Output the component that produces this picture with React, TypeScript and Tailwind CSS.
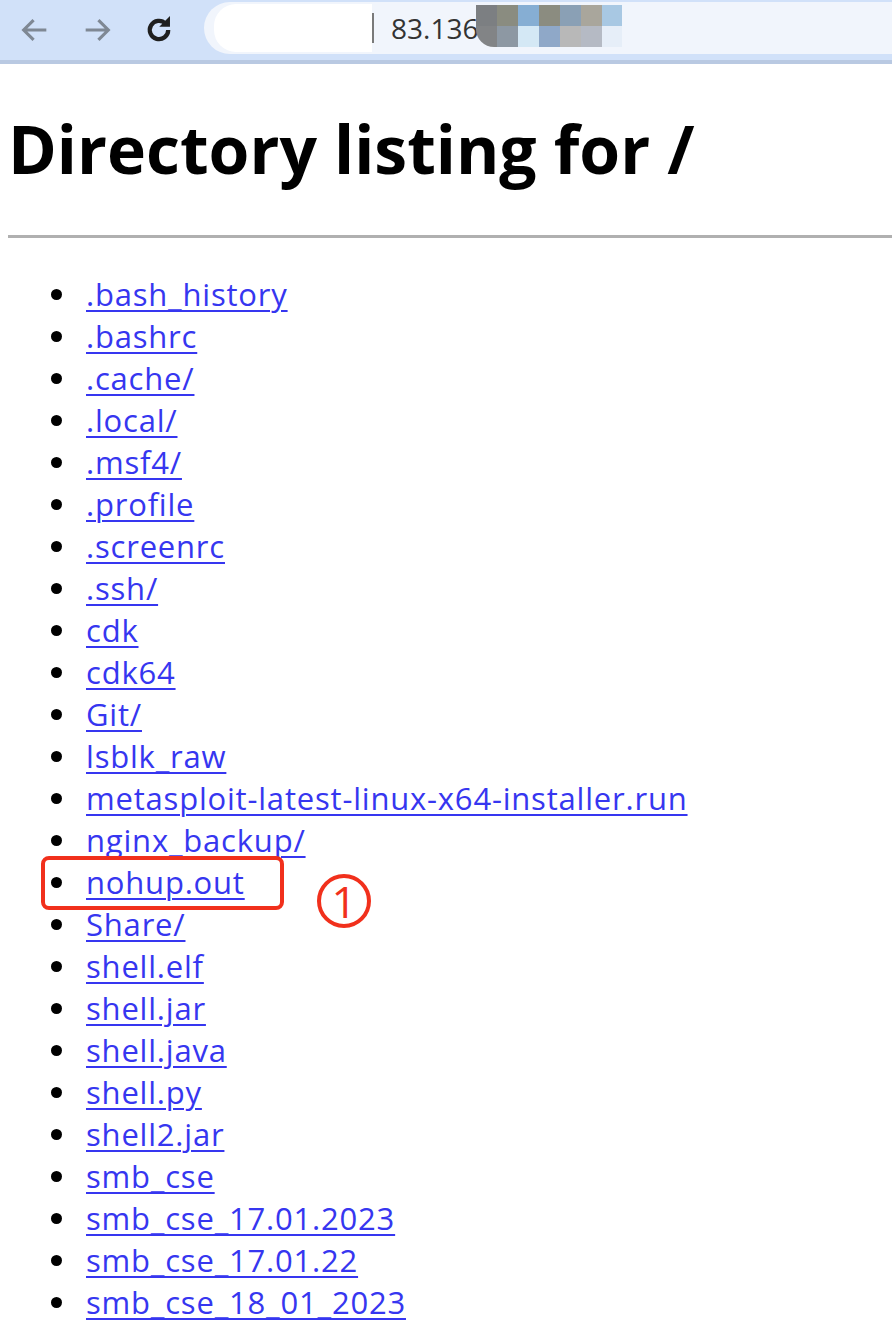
import React from 'react';

const entries = [
  '.bash_history',
  '.bashrc',
  '.cache/',
  '.local/',
  '.msf4/',
  '.profile',
  '.screenrc',
  '.ssh/',
  'cdk',
  'cdk64',
  'Git/',
  'lsblk_raw',
  'metasploit-latest-linux-x64-installer.run',
  'nginx_backup/',
  'nohup.out',
  'Share/',
  'shell.elf',
  'shell.jar',
  'shell.java',
  'shell.py',
  'shell2.jar',
  'smb_cse',
  'smb_cse_17.01.2023',
  'smb_cse_17.01.22',
  'smb_cse_18_01_2023',
];

function BrowserBar() {
  return (
    <div className="h-[64px] bg-[#d1e1f9] border-b-[4px] border-[#b9c9e2] flex items-center">
      <div className="flex items-center gap-[28px] pl-[18px] pr-[28px] text-[#7f8894]">
        <svg width="34" height="34" viewBox="0 0 24 24" fill="none" stroke="currentColor" strokeWidth="2.2">
          <path d="M20 12H4M11 5l-7 7 7 7" />
        </svg>
        <svg width="34" height="34" viewBox="0 0 24 24" fill="none" stroke="currentColor" strokeWidth="2.2">
          <path d="M4 12h16M13 5l7 7-7 7" />
        </svg>
        <svg width="34" height="34" viewBox="0 0 24 24" fill="none" stroke="#1f1f1f" strokeWidth="3">
          <path d="M18.5 12a6.5 6.5 0 1 1-1.9-4.6" />
          <path d="M19 4v5h-5z" fill="#1f1f1f" strokeWidth="1.5" />
        </svg>
      </div>
      <div className="flex-1 h-[52px] mt-[-4px] bg-[#f1f5fc] rounded-l-[26px] flex items-center overflow-hidden">
        <div className="w-[158px] h-[48px] ml-[10px] bg-white rounded-l-[22px]" />
        <div className="w-[2px] h-[30px] bg-[#7a7a7a]" />
        <span className="ml-[17px] text-[28px] text-[#333] font-['Open_Sans',sans-serif]">83.136</span>
        <div className="ml-[-2px] mt-[-4px] h-[42px] w-[146px] rounded-bl-[18px] overflow-hidden grid grid-cols-7 grid-rows-2">
          <div className="bg-[#7c7f82]" />
          <div className="bg-[#8a8c80]" />
          <div className="bg-[#86aed3]" />
          <div className="bg-[#8b8c80]" />
          <div className="bg-[#8aa0b5]" />
          <div className="bg-[#a9a69c]" />
          <div className="bg-[#a8c8e3]" />
          <div className="bg-[#828486]" />
          <div className="bg-[#8d98a3]" />
          <div className="bg-[#d4e8f5]" />
          <div className="bg-[#8fa8c8]" />
          <div className="bg-[#b8b8b8]" />
          <div className="bg-[#b5bac4]" />
          <div className="bg-[#e6eef8]" />
        </div>
      </div>
    </div>
  );
}

export default function App() {
  return (
    <div className="w-[892px] h-[1344px] bg-white overflow-hidden relative">
      <BrowserBar />
      <div className="px-[8px]">
        <h1 className="mt-[44px] text-[66px] leading-[80px] font-bold text-black font-['Open_Sans',sans-serif]">
          Directory listing for /
        </h1>
        <hr className="mt-[47px] border-0 h-[3px] bg-[#b0b0b0] mr-[-8px]" />
        <ul className="mt-[35px]">
          {entries.map((name) => (
            <li key={name} className="flex items-center h-[42px]">
              <span className="w-[11px] h-[11px] rounded-full bg-black ml-[43px] mr-[24px]" />
              <a
                href="#"
                className="text-[31px] leading-[42px] text-[#3636f0] underline decoration-[2px] underline-offset-[4px] font-['Open_Sans',sans-serif] tracking-[0.8px]"
              >
                {name}
              </a>
            </li>
          ))}
        </ul>
      </div>
      <div className="absolute left-[41px] top-[856px] w-[243px] h-[54px] border-[4px] border-[#f1301c] rounded-[8px]" />
      <div className="absolute left-[317px] top-[874px] w-[54px] h-[54px] rounded-full border-[4px] border-[#f1301c] flex items-center justify-center text-[#f1301c] text-[44px] leading-none font-['Open_Sans',sans-serif]">
        1
      </div>
    </div>
  );
}
